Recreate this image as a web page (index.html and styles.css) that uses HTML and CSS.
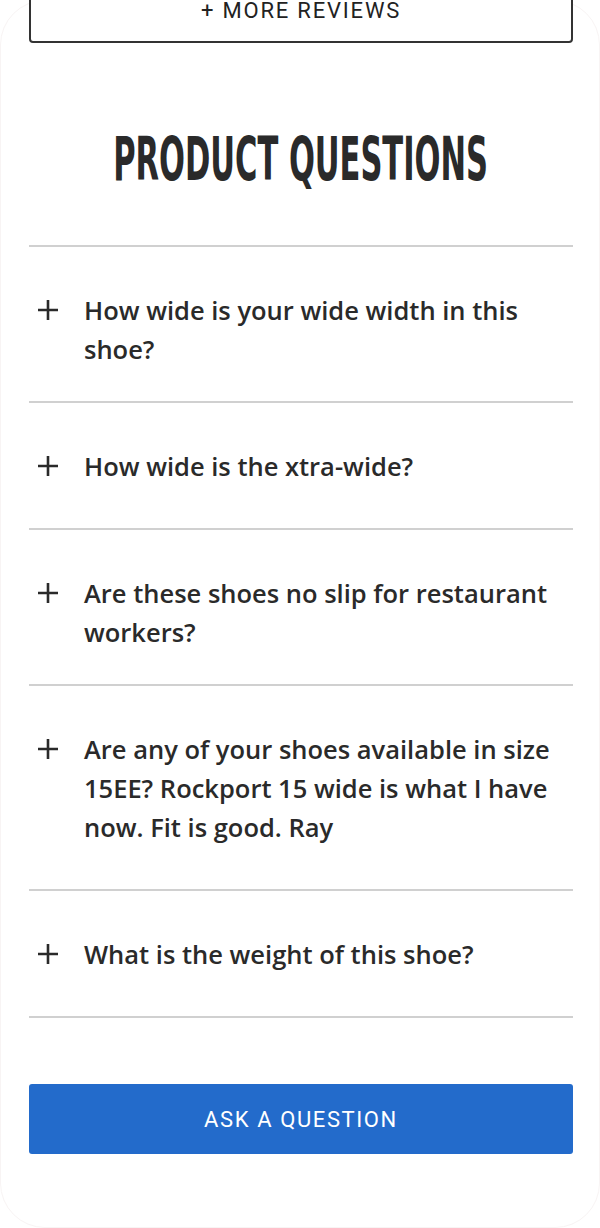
FILE: index.html
```html
<!DOCTYPE html>
<html lang="en">
<head>
  <meta charset="UTF-8" />
  <title>Product Questions</title>
  <link rel="stylesheet" href="styles.css">
</head>
<body>
  <div class="card">
    <button class="more-reviews">+ MORE REVIEWS</button>

    <h2 class="titulo"><span>PRODUCT QUESTIONS</span></h2>

    <ul class="preguntas">
      <li class="pregunta corta">
        <svg class="mas" viewBox="0 0 20 20"><path d="M10 0v20M0 10h20" /></svg>
        <span class="texto">How wide is your wide width in this shoe?</span>
      </li>
      <li class="pregunta">
        <svg class="mas" viewBox="0 0 20 20"><path d="M10 0v20M0 10h20" /></svg>
        <span class="texto">How wide is the xtra-wide?</span>
      </li>
      <li class="pregunta corta">
        <svg class="mas" viewBox="0 0 20 20"><path d="M10 0v20M0 10h20" /></svg>
        <span class="texto">Are these shoes no slip for restaurant workers?</span>
      </li>
      <li class="pregunta">
        <svg class="mas" viewBox="0 0 20 20"><path d="M10 0v20M0 10h20" /></svg>
        <span class="texto">Are any of your shoes available in size 15EE? Rockport 15 wide is what I have now. Fit is good. Ray</span>
      </li>
      <li class="pregunta">
        <svg class="mas" viewBox="0 0 20 20"><path d="M10 0v20M0 10h20" /></svg>
        <span class="texto">What is the weight of this shoe?</span>
      </li>
    </ul>

    <button class="preguntar">ASK A QUESTION</button>
  </div>
</body>
</html>
```

FILE: styles.css
```css
body { margin: 0; background: #fff; overflow: hidden; }
.card {
  height: 1228px;
  box-sizing: border-box;
  border: 1px solid #f8f4f4;
  border-radius: 45px;
  padding: 0 26px 0 28px;
}
.more-reviews {
  display: block;
  width: 100%;
  height: 66px;
  margin-top: -24px;
  background: #fff;
  border: 2px solid #333;
  border-radius: 4px;
  font-family: Roboto, sans-serif;
  font-size: 22px;
  letter-spacing: 1.8px;
  color: #222;
}
.titulo {
  display: flex;
  justify-content: center;
  margin: 0;
  padding-top: 86px;
  height: 116px;
  font-family: "DejaVu Sans Condensed", "DejaVu Sans", sans-serif;
  font-weight: bold;
  font-size: 60px;
  line-height: 60px;
  color: #2a2a2a;
}
.titulo span { flex: none; transform: scaleX(0.565); white-space: nowrap; }
.preguntas {
  list-style: none;
  margin: 0;
  padding: 0;
  border-top: 2px solid #d0d0d0;
}
.pregunta {
  display: flex;
  align-items: flex-start;
  padding: 44px 0 42px;
  border-bottom: 2px solid #d0d0d0;
  font-family: "Open Sans", sans-serif;
  font-weight: 600;
  font-size: 25.5px;
  line-height: 39px;
  color: #2a2a2a;
}
.pregunta.corta { padding-bottom: 32px; }
.mas {
  flex: none;
  width: 20px;
  height: 20px;
  margin: 9px 26px 0 9px;
  stroke: #2a2a2a;
  stroke-width: 2.6;
  fill: none;
}
.preguntar {
  display: block;
  width: 100%;
  height: 70px;
  margin-top: 66px;
  background: #236bcb;
  border: none;
  border-radius: 3px;
  font-family: Roboto, sans-serif;
  font-size: 22px;
  letter-spacing: 1.6px;
  color: #fff;
}
```
